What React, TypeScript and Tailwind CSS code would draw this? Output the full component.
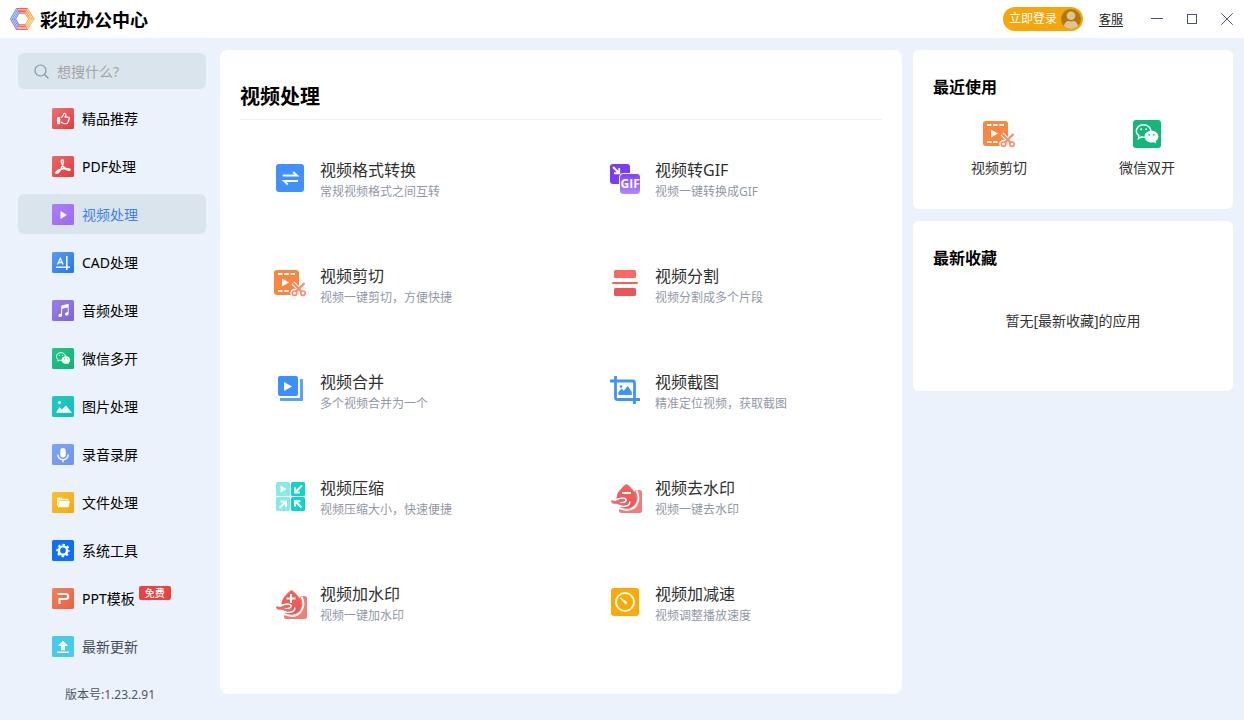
import type { ReactNode } from "react";
import { FaRegThumbsUp } from "react-icons/fa6";
import { IoMusicalNotes } from "react-icons/io5";

interface NavItem {
  label: string;
  icon: ReactNode;
  active?: boolean;
  muted?: boolean;
  badge?: string;
}

interface Tool {
  title: string;
  desc: string;
  icon: ReactNode;
}

function Tile({ id, from, to, children }: { id: string; from: string; to: string; children: ReactNode }) {
  return (
    <svg width="22" height="22" viewBox="0 0 22 22" fill="none" className="shrink-0">
      <defs>
        <linearGradient id={id} x1="0" y1="0" x2="1" y2="1">
          <stop offset="0" stopColor={from} />
          <stop offset="1" stopColor={to} />
        </linearGradient>
      </defs>
      <rect width="22" height="21" rx="1.5" fill={`url(#${id})`} />
      {children}
    </svg>
  );
}

function Art({ children }: { children: ReactNode }) {
  return (
    <svg width="40" height="40" viewBox="0 0 40 40" fill="none" className="shrink-0">
      {children}
    </svg>
  );
}

// Two chat bubbles: the back one outlined, the front one solid
function WechatMark() {
  return (
    <>
      <path
        d="M16.500 8.800c-4.200 0-7.200 2.700-7.200 6.200 0 2.100 1.100 3.700 2.700 4.900l-.5 2.600 2.800-1.500c.7.200 1.500.3 2.200.3 4.200 0 7.400-2.800 7.400-6.300s-3.200-6.200-7.400-6.200Z"
        stroke="#fff"
        strokeWidth="1.500"
      />
      <circle cx="14.200" cy="13.300" r="1" fill="#fff" />
      <circle cx="19.200" cy="13.300" r="1" fill="#fff" />
      <path
        d="M24.500 14.700c-3.900 0-7 2.600-7 5.900s3.100 6 7 6c.8 0 1.600-.1 2.300-.4l2.500 1.400-.6-2.300c1.600-1.100 2.700-2.700 2.700-4.700 0-3.300-3-5.900-6.900-5.900Z"
        fill="#fff"
      />
      <circle cx="22.200" cy="18.800" r=".9" fill="#12b877" />
      <circle cx="26.800" cy="18.800" r=".9" fill="#12b877" />
    </>
  );
}

const NAV: NavItem[] = [
  {
    label: "精品推荐",
    icon: (
      <Tile id="n1" from="#f27070" to="#e23c3c">
        <FaRegThumbsUp x="5" y="4" size={13} color="#fff" />
      </Tile>
    ),
  },
  {
    label: "PDF处理",
    icon: (
      <Tile id="n2" from="#f06767" to="#e23c3c">
        <path
          d="M10 4c1.700-.6 1.600 2.200.9 4.300C9.800 11.500 7.300 16.500 4.800 17.200c-2 .3-.6-2.200 2.700-3.400 3-1.100 7.200-1.600 9.600-.9 1.900.6.9 1.900-.8 1.300-3.400-.9-7-5.500-7-8.600 0-.9.2-1.500.7-1.600Z"
          stroke="#fff"
          strokeWidth="1.500"
        />
      </Tile>
    ),
  },
  {
    label: "视频处理",
    active: true,
    icon: (
      <Tile id="n3" from="#b07bf8" to="#9b6bee">
        <path d="M8.500 7v8l6.500-4z" fill="#fff" />
      </Tile>
    ),
  },
  {
    label: "CAD处理",
    icon: (
      <Tile id="n4" from="#5b9cf8" to="#1c78f2">
        <path d="M5.500 12.500 8.300 6.300l2.800 6.200M6.500 10.500h3.600" stroke="#fff" strokeWidth="1.300" />
        <path d="M4 15.300h14M14.800 4v14" stroke="#fff" strokeWidth="1.500" />
      </Tile>
    ),
  },
  {
    label: "音频处理",
    icon: (
      <Tile id="n5" from="#9a80ea" to="#7c62dc">
        <IoMusicalNotes x="4" y="3" size={15} color="#fff" />
      </Tile>
    ),
  },
  {
    label: "微信多开",
    icon: (
      <Tile id="n6" from="#1fc685" to="#10b474">
        <g transform="translate(-1.300 -.8) scale(.62)">
          <WechatMark />
        </g>
      </Tile>
    ),
  },
  {
    label: "图片处理",
    icon: (
      <Tile id="n7" from="#1ecdc0" to="#0fbdbb">
        <path d="M4 16.800 7.500 11l2.300 2.600L14 9.500l6 7.300z" fill="#fff" />
        <circle cx="7.500" cy="6.500" r="1.600" fill="#fff" />
      </Tile>
    ),
  },
  {
    label: "录音录屏",
    icon: (
      <Tile id="n8" from="#7fa5f8" to="#6c94ee">
        <rect x="8.300" y="4" width="5.400" height="9.500" rx="2.700" fill="#fff" />
        <path d="M5.800 10.500a5.200 5.200 0 0 0 10.400 0M11 15.700v2.600" stroke="#fff" strokeWidth="1.400" />
      </Tile>
    ),
  },
  {
    label: "文件处理",
    icon: (
      <Tile id="n9" from="#fcc02f" to="#fba708">
        <path d="M5 6.500c0-.6.400-1 1-1h3.500l1.300 1.300H16c.5 0 .9.400.9.900v.8H7.200L5.600 14H5z" fill="#fff" opacity=".9" />
        <path d="M7.500 9H18l-1.400 6.200H5.800z" fill="#fff" />
      </Tile>
    ),
  },
  {
    label: "系统工具",
    icon: (
      <Tile id="n10" from="#0a70ff" to="#0a70ff">
        <circle cx="11" cy="10.500" r="4.100" stroke="#fff" strokeWidth="2.400" />
        <circle cx="11" cy="10.500" r="5.800" stroke="#fff" strokeWidth="2" strokeDasharray="2.400 2.155" strokeDashoffset="1.200" />
      </Tile>
    ),
  },
  {
    label: "PPT模板",
    badge: "免费",
    icon: (
      <Tile id="n11" from="#f58059" to="#e9623c">
        <path d="M5.500 6h8.200c3.300 0 3.300 5 0 5H7.500v5" stroke="#fff" strokeWidth="2.200" />
      </Tile>
    ),
  },
  {
    label: "最新更新",
    muted: true,
    icon: (
      <Tile id="n12" from="#46cbec" to="#46cbec">
        <path d="m11 4.800 5.300 5.200h-3.300v4.300H9V10H5.700zM5.200 15.500h11.600V17H5.200z" fill="#fff" />
      </Tile>
    ),
  },
];

function CutIcon() {
  return (
    <Art>
      <rect x="4" y="5" width="25" height="25" rx="3" fill="#fb8541" />
      <path d="M8 9h4.500M14.200 9h4.500M20.500 9H25M8 26h4.500M14.200 26h4.500" stroke="#fff" strokeWidth="2" />
      <path d="M12 13.500v8l7-4z" fill="#fff" />
      <g stroke="#fff" strokeWidth="4">
        <path d="M23 18l9 9M34.500 18l-9 9" />
        <circle cx="24.500" cy="28" r="2.200" />
        <circle cx="33" cy="28" r="2.200" />
      </g>
      <path d="M23 18l8.600 8.600M34.500 18l-8.600 8.600" stroke="#fa8d72" strokeWidth="2.300" />
      <circle cx="24.500" cy="28.200" r="2.200" stroke="#fa8d72" strokeWidth="1.600" />
      <circle cx="33" cy="28.200" r="2.200" stroke="#fa8d72" strokeWidth="1.600" />
    </Art>
  );
}

// Drop held by a hand, shared by both watermark tools
function WatermarkIcon({ id, mark }: { id: string; mark: string }) {
  return (
    <Art>
      <defs>
        <linearGradient id={id} x1="0" y1="0" x2="0" y2="1">
          <stop offset="0" stopColor="#f5625f" />
          <stop offset="1" stopColor="#e85654" />
        </linearGradient>
      </defs>
      <path d="M31 13h3.500a2.500 2.500 0 0 1 2.500 2.500v18a2.500 2.500 0 0 1-2.500 2.500h-18a2.500 2.500 0 0 1-2.500-2.500V31z" fill="#f27c7a" />
      <path
        d="M21.500 7C17 10.500 11.500 15 11.500 21.500c0 5.500 4.500 9.500 10 9.500s9.800-4 9.800-9.500C31.300 15 26 10.500 21.500 7Z"
        fill={`url(#${id})`}
      />
      <path d="M31.500 13.500c4.500 8.500.5 19-9.500 19.500-3.500 0-5.500-1.200-9-2.200" stroke="#fff" strokeWidth="1.900" />
      <path
        d="M9 22.600c3.500.3 5.500-1.600 8.500-1.600 3.500 0 5 2.500 2 4-1.500.8-3 .8-4.500.6M9.500 28c4-.5 6 1.500 9.500 1.300 3.500-.2 5.800-1.800 5.800-4.300"
        stroke="#fff"
        strokeWidth="1.600"
        strokeLinecap="round"
      />
      <path
        d="M7 24.200c1.500.8 3 .9 4.500.5 2.200-.6 4-1.800 6-1.600M7.500 25.200c3 1 5 0 7.500 1.500 2.500 1.500 5 .8 6.500-.8"
        stroke="#ee6a67"
        strokeWidth="2"
        strokeLinecap="round"
      />
      <path d={mark} stroke="#fff" strokeWidth="2" />
    </Art>
  );
}

const TOOLS: Tool[] = [
  {
    title: "视频格式转换",
    desc: "常规视频格式之间互转",
    icon: (
      <Art>
        <rect x="6" y="5" width="28" height="28" rx="3" fill="#4090ff" />
        <path d="M12.700 16.500H27l-3.800-3.500M28 22H14l3.800 3.500" stroke="#fff" strokeWidth="1.900" />
      </Art>
    ),
  },
  {
    title: "视频转GIF",
    desc: "视频一键转换成GIF",
    icon: (
      <Art>
        <defs>
          <linearGradient id="gif" x1="0" y1="0" x2="0" y2="1">
            <stop offset="0" stopColor="#7d42f5" />
            <stop offset="1" stopColor="#b78afc" />
          </linearGradient>
        </defs>
        <rect x="5" y="5" width="20" height="20" rx="3" fill="#7a3cf6" />
        <path d="M8 8l6 6M14.200 9v5.200H9" stroke="#fff" strokeWidth="1.900" />
        <rect x="14.500" y="14.500" width="21" height="21" rx="3.500" fill="url(#gif)" stroke="#fff" />
        <text x="15.500" y="28.500" fill="#fff" fontSize="12" fontWeight="700" fontFamily="Open Sans, sans-serif">
          GIF
        </text>
      </Art>
    ),
  },
  { title: "视频剪切", desc: "视频一键剪切，方便快捷", icon: <CutIcon /> },
  {
    title: "视频分割",
    desc: "视频分割成多个片段",
    icon: (
      <Art>
        <rect x="9" y="5" width="22" height="8" rx="1.500" fill="#f96862" />
        <rect x="7" y="17" width="26" height="2" rx="1" fill="#f5625f" />
        <rect x="9" y="23" width="22" height="8" rx="1.500" fill="#ea5655" />
      </Art>
    ),
  },
  {
    title: "视频合并",
    desc: "多个视频合并为一个",
    icon: (
      <Art>
        <path d="M30 8h2c.6 0 1 .4 1 1v20c0 .6-.4 1-1 1H11c-.6 0-1-.4-1-1v-2h20z" fill="#5b9fff" />
        <rect x="8" y="5" width="20" height="20" rx="2" fill="#3d90fb" />
        <path d="M14 11v9l8-4.500z" fill="#fff" />
      </Art>
    ),
  },
  {
    title: "视频截图",
    desc: "精准定位视频，获取截图",
    icon: (
      <Art>
        <path d="M5 10h22.500a2 2 0 0 1 2 2v21M10.500 5v21.500a2 2 0 0 0 2 2H35" stroke="#3f93fc" strokeWidth="2.800" />
        <path d="M13.500 24v-3l3-3.500 2.300 2.200 4-4.700 4 6v3z" fill="#3f93fc" />
        <circle cx="16" cy="15.500" r="1.300" fill="#3f93fc" />
      </Art>
    ),
  },
  {
    title: "视频压缩",
    desc: "视频压缩大小，快速便捷",
    icon: (
      <Art>
        <rect x="6" y="5" width="14" height="14" rx="1.500" fill="#87ebe5" />
        <rect x="21" y="5" width="14" height="14" rx="1.500" fill="#0cd6ca" />
        <rect x="6" y="20" width="14" height="14" rx="1.500" fill="#87ebe5" />
        <rect x="21" y="20" width="14" height="14" rx="1.500" fill="#0cd6ca" />
        <path d="M10.500 8.500v7l6-3.500z" fill="#fff" />
        <path
          d="M32 8.500l-6.500 6.500M25 10.500v5h5M9.500 31l6-6M10.500 24.500h5.500v5.500M31.500 30.500l-6-6M25 29.500v-5.300h5.500"
          stroke="#fff"
          strokeWidth="2"
        />
      </Art>
    ),
  },
  { title: "视频去水印", desc: "视频一键去水印", icon: <WatermarkIcon id="wmRemove" mark="M17 16h9" /> },
  { title: "视频加水印", desc: "视频一键加水印", icon: <WatermarkIcon id="wmAdd" mark="M16.500 15.500h9M21 11v9" /> },
  {
    title: "视频加减速",
    desc: "视频调整播放速度",
    icon: (
      <Art>
        <rect x="6" y="5" width="28" height="28" rx="3" fill="#ffa800" />
        <circle cx="20" cy="19" r="9" stroke="#fff" strokeWidth="2" />
        <path d="m15.500 15 4.500 5.500a1 1 0 0 0 1.500-1.500z" fill="#fff" stroke="#fff" />
      </Art>
    ),
  },
];

const LOGO_COLORS = ["#f0605f", "#f5a24a", "#f3bd5c", "#ee6a62", "#8b7fe8", "#6a9cf0"];
const LOGO_POINTS = [
  [6.500, 1.500],
  [17.500, 1.500],
  [24, 12],
  [17.500, 22.500],
  [6.500, 22.500],
  [0.500, 12],
];

function Logo() {
  return (
    <svg width="25" height="24" viewBox="0 0 25 24" fill="none">
      {[1, 0.85, 0.7, 0.56].map((scale) => (
        <g key={scale} strokeWidth="1.100" strokeLinecap="round">
          {LOGO_POINTS.map(([x, y], i) => {
            const [nx, ny] = LOGO_POINTS[(i + 1) % 6];
            return (
              <line
                key={i}
                x1={12 + (x - 12) * scale}
                y1={12 + (y - 12) * scale}
                x2={12 + (nx - 12) * scale}
                y2={12 + (ny - 12) * scale}
                stroke={LOGO_COLORS[i]}
              />
            );
          })}
        </g>
      ))}
    </svg>
  );
}

function Header() {
  return (
    <header className="flex h-[38px] items-center bg-white pl-2.5 pr-[11px]">
      <Logo />
      <h1 className="ml-[5px] pt-0.5 text-lg leading-6 font-bold text-black">彩虹办公中心</h1>
      <div className="ml-auto flex items-center">
        <button className="flex h-6 items-center gap-1 rounded-full bg-[#f7a60a] pr-0.5 pl-1.5 text-xs text-white">
          立即登录
          <svg width="20" height="20" viewBox="0 0 20 20">
            <defs>
              <clipPath id="avatar">
                <circle cx="10" cy="10" r="10" />
              </clipPath>
            </defs>
            <circle cx="10" cy="10" r="10" fill="#b0790f" />
            <g clipPath="url(#avatar)" fill="#dfc493">
              <circle cx="10" cy="6.800" r="4.300" />
              <path d="M2.500 20c0-4.500 2.500-8 5-8 1 .6 4 .6 5 0 2.500 0 5 3.500 5 8z" />
            </g>
          </svg>
        </button>
        <a href="#service" className="ml-4 pt-0.5 text-xs text-[#222] underline underline-offset-2">
          客服
        </a>
        <div className="ml-7 flex items-center gap-[23px] text-[#4a5470]">
          <button aria-label="最小化">
            <svg width="12" height="12" viewBox="0 0 12 12" stroke="currentColor" className="block">
              <path d="M0 5.500h12" />
            </svg>
          </button>
          <button aria-label="最大化">
            <svg width="12" height="12" viewBox="0 0 12 12" stroke="currentColor" fill="none" className="block">
              <rect x="1.500" y="1.500" width="9" height="9" />
            </svg>
          </button>
          <button aria-label="关闭">
            <svg width="12" height="12" viewBox="0 0 12 12" stroke="currentColor" className="block">
              <path d="M.3.300l11.400 11.400M11.700.300.300 11.700" />
            </svg>
          </button>
        </div>
      </div>
    </header>
  );
}

function Sidebar() {
  return (
    <aside className="flex w-[188px] shrink-0 flex-col pt-[3px]">
      <label className="flex h-9 items-center gap-2 rounded-md bg-[#dae4ec] pl-4">
        <svg width="15" height="15" viewBox="0 0 15 15" fill="none" stroke="#8494ac" strokeWidth="1.200" className="shrink-0">
          <circle cx="6.500" cy="6.500" r="5.500" />
          <path d="m10.500 10.500 4 4" />
        </svg>
        <input
          aria-label="搜索"
          placeholder="想搜什么?"
          className="w-full min-w-0 bg-transparent pt-0.5 text-sm outline-none placeholder:text-[#a3a3a3]"
        />
      </label>
      <nav className="mt-[9px] flex flex-col gap-2">
        {NAV.map((item) => (
          <button
            key={item.label}
            className={`flex h-10 items-center gap-2 rounded-md pt-0.5 pl-[34px] text-sm ${
              item.active ? "bg-[#dae4ec] text-[#3b7ff0]" : item.muted ? "text-[#444c58]" : "text-black"
            }`}
          >
            {item.icon}
            <span className="relative">
              {item.label}
              {item.badge && (
                <span className="absolute -top-[3px] left-full ml-1 rounded-xs bg-[#f04141] px-1.5 text-[10px] leading-[14px] font-medium whitespace-nowrap text-white">
                  {item.badge}
                </span>
              )}
            </span>
          </button>
        ))}
      </nav>
      <p className="mt-[21px] pr-1 text-center text-xs text-[#4f5560]">版本号:1.23.2.91</p>
    </aside>
  );
}

export default function App() {
  return (
    <div className="flex min-h-screen flex-col bg-[#ebf2fb] font-['Noto_Sans','Noto_Sans_CJK_SC',sans-serif]">
      <Header />
      <div className="flex flex-1 pt-3 pr-[11px] pl-[18px]">
        <Sidebar />
        <main className="mb-[26px] ml-3.5 min-w-0 flex-1 rounded-lg bg-white">
          <h2 className="mx-5 border-b border-[#f0f0f0] pt-[33px] pb-2 text-xl leading-7 font-bold text-black">视频处理</h2>
          <div className="mt-1.5 grid grid-cols-2 pr-1 pl-2">
            {TOOLS.map((tool) => (
              <button key={tool.title} className="flex h-[106px] items-center gap-2.5 pl-[42px] text-left">
                {tool.icon}
                <span className="flex flex-col pt-0.5">
                  <span className="text-base leading-6 text-[#303030]">{tool.title}</span>
                  <span className="text-xs leading-5 text-[#9197a5]">{tool.desc}</span>
                </span>
              </button>
            ))}
          </div>
        </main>
        <div className="ml-[11px] flex w-80 shrink-0 flex-col gap-3">
          <section className="rounded-md bg-white pt-[25px] pb-[31px]">
            <h3 className="px-5 text-base leading-6 font-bold text-black">最近使用</h3>
            <div className="mt-[17px] grid grid-cols-2 px-3">
              <button className="flex flex-col items-center gap-0.5 text-sm leading-5 text-[#333]">
                <CutIcon />
                视频剪切
              </button>
              <button className="flex flex-col items-center gap-0.5 text-sm leading-5 text-[#333]">
                <Art>
                  <rect x="6" y="4" width="28" height="28" rx="3" fill="#12b877" />
                  <WechatMark />
                </Art>
                微信双开
              </button>
            </div>
          </section>
          <section className="rounded-md bg-white pt-[25px] pb-[60px]">
            <h3 className="px-5 text-base leading-6 font-bold text-black">最新收藏</h3>
            <p className="mt-[41px] text-center text-sm leading-5 text-[#333]">暂无[最新收藏]的应用</p>
          </section>
        </div>
      </div>
    </div>
  );
}
